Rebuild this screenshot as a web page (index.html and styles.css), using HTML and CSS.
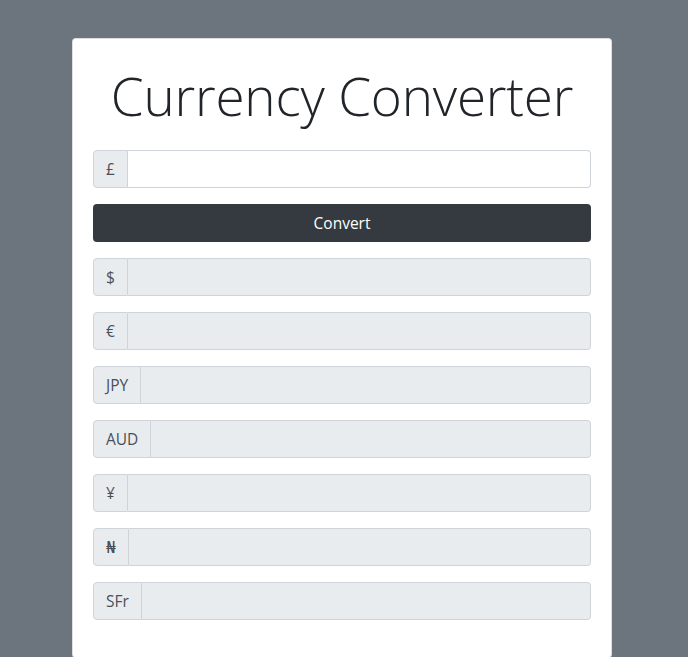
FILE: index.html
```html
<!DOCTYPE html>
<html>
<head>
<meta charset="utf-8">
<link rel="stylesheet" href="styles.css">
</head>
<body>
<div class="card">
  <h1 class="title">Currency Converter</h1>
  <div class="group"><span class="prefix">£</span><input class="field" type="text"></div>
  <button class="btn">Convert</button>
  <div class="group"><span class="prefix">$</span><input class="field ro" type="text" readonly></div>
  <div class="group"><span class="prefix">€</span><input class="field ro" type="text" readonly></div>
  <div class="group"><span class="prefix">JPY</span><input class="field ro" type="text" readonly></div>
  <div class="group"><span class="prefix">AUD</span><input class="field ro" type="text" readonly></div>
  <div class="group"><span class="prefix">¥</span><input class="field ro" type="text" readonly></div>
  <div class="group"><span class="prefix">₦</span><input class="field ro" type="text" readonly></div>
  <div class="group"><span class="prefix">SFr</span><input class="field ro" type="text" readonly></div>
</div>
</body>
</html>
```
FILE: styles.css
```css
html, body {
  margin: 0;
  padding: 0;
  background: #6c757d;
  font-family: "Open Sans", "DejaVu Sans", sans-serif;
  font-size: 16px;
  color: #212529;
}
body {
  padding-top: 38px;
}
.card {
  box-sizing: border-box;
  width: 540px;
  margin-left: 72px;
  background: #fff;
  border: 1px solid rgba(0,0,0,.125);
  border-radius: 4px;
  padding: 19px 20px 20px;
  display: flex;
  flex-direction: column;
  gap: 16px;
  min-height: 620px;
}
.title {
  margin: 0;
  text-align: center;
  font-weight: 300;
  font-size: 53px;
  line-height: 76px;
  color: #212529;
  letter-spacing: -0.2px;
}
.group {
  display: flex;
  height: 38px;
}
.prefix {
  display: flex;
  align-items: center;
  padding: 0 12px;
  background: #e9ecef;
  border: 1px solid #ced4da;
  border-radius: 4px 0 0 4px;
  color: #495057;
  font-size: 15.5px;
}
.field {
  flex: 1;
  min-width: 0;
  box-sizing: border-box;
  height: 38px;
  margin: 0;
  border: 1px solid #ced4da;
  border-left: none;
  border-radius: 0 4px 4px 0;
  background: #fff;
  padding: 6px 12px;
  font: inherit;
  outline: none;
}
.field.ro {
  background: #e9ecef;
}
.btn {
  height: 38px;
  border: none;
  border-radius: 4px;
  background: #343a40;
  color: #fff;
  font-family: inherit;
  font-size: 15.5px;
  cursor: pointer;
}
```
